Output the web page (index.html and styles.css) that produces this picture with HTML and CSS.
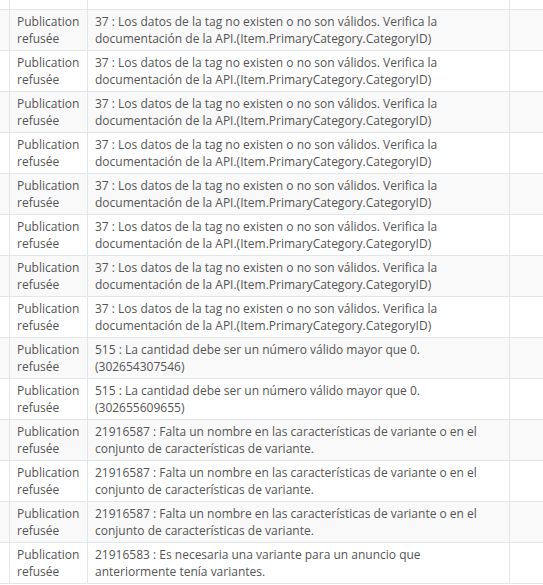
FILE: index.html
```html
<!DOCTYPE html>
<html lang="fr">

<head>
    <meta charset="UTF-8">
    <title>Journal des publications</title>
    <link rel="stylesheet" href="styles.css">
</head>

<body>
    <div class="log-wrap">
        <table class="log-table">
            <colgroup>
                <col class="col-edge">
                <col class="col-status">
                <col class="col-msg">
                <col class="col-extra">
            </colgroup>
            <tr class="spacer-row">
                <td></td>
                <td></td>
                <td></td>
                <td></td>
            </tr>
            <tr>
                <td></td>
                <td>Publication refusée</td>
                <td>37 : Los datos de la tag no existen o no son válidos. Verifica la documentación de la API.(Item.PrimaryCategory.CategoryID)</td>
                <td></td>
            </tr>
            <tr>
                <td></td>
                <td>Publication refusée</td>
                <td>37 : Los datos de la tag no existen o no son válidos. Verifica la documentación de la API.(Item.PrimaryCategory.CategoryID)</td>
                <td></td>
            </tr>
            <tr>
                <td></td>
                <td>Publication refusée</td>
                <td>37 : Los datos de la tag no existen o no son válidos. Verifica la documentación de la API.(Item.PrimaryCategory.CategoryID)</td>
                <td></td>
            </tr>
            <tr>
                <td></td>
                <td>Publication refusée</td>
                <td>37 : Los datos de la tag no existen o no son válidos. Verifica la documentación de la API.(Item.PrimaryCategory.CategoryID)</td>
                <td></td>
            </tr>
            <tr>
                <td></td>
                <td>Publication refusée</td>
                <td>37 : Los datos de la tag no existen o no son válidos. Verifica la documentación de la API.(Item.PrimaryCategory.CategoryID)</td>
                <td></td>
            </tr>
            <tr>
                <td></td>
                <td>Publication refusée</td>
                <td>37 : Los datos de la tag no existen o no son válidos. Verifica la documentación de la API.(Item.PrimaryCategory.CategoryID)</td>
                <td></td>
            </tr>
            <tr>
                <td></td>
                <td>Publication refusée</td>
                <td>37 : Los datos de la tag no existen o no son válidos. Verifica la documentación de la API.(Item.PrimaryCategory.CategoryID)</td>
                <td></td>
            </tr>
            <tr>
                <td></td>
                <td>Publication refusée</td>
                <td>37 : Los datos de la tag no existen o no son válidos. Verifica la documentación de la API.(Item.PrimaryCategory.CategoryID)</td>
                <td></td>
            </tr>
            <tr>
                <td></td>
                <td>Publication refusée</td>
                <td>515 : La cantidad debe ser un número válido mayor que 0.<br>(302654307546)</td>
                <td></td>
            </tr>
            <tr>
                <td></td>
                <td>Publication refusée</td>
                <td>515 : La cantidad debe ser un número válido mayor que 0.<br>(302655609655)</td>
                <td></td>
            </tr>
            <tr>
                <td></td>
                <td>Publication refusée</td>
                <td>21916587 : Falta un nombre en las características de variante o en el conjunto de características de variante.</td>
                <td></td>
            </tr>
            <tr>
                <td></td>
                <td>Publication refusée</td>
                <td>21916587 : Falta un nombre en las características de variante o en el conjunto de características de variante.</td>
                <td></td>
            </tr>
            <tr>
                <td></td>
                <td>Publication refusée</td>
                <td>21916587 : Falta un nombre en las características de variante o en el conjunto de características de variante.</td>
                <td></td>
            </tr>
            <tr>
                <td></td>
                <td>Publication refusée</td>
                <td>21916583 : Es necesaria una variante para un anuncio que anteriormente tenía variantes.</td>
                <td></td>
            </tr>
        </table>
    </div>
</body>

</html>
```

FILE: styles.css
```css
/* journal des erreurs de publication */
body {
    margin: 0;
    font-family: 'Open Sans', sans-serif;
    font-size: 12px;
    color: #555;
    background: #fff;
    overflow: hidden;
}

.log-wrap {
    width: 543px;
    height: 585px;
    overflow: hidden;
}

.log-table {
    border-collapse: separate;
    border-spacing: 0;
    table-layout: fixed;
    width: 610px;
}

.col-edge {
    width: 10px;
}

.col-status {
    width: 78px;
}

.col-msg {
    width: 422px;
}

.col-extra {
    width: 100px;
}

.log-table td {
    box-sizing: border-box;
    border-right: 1px solid #e4e7ea;
    border-bottom: 1px solid #e4e7ea;
    padding: 3px 7px;
    line-height: 17px;
    height: 41px;
    vertical-align: top;
}

.log-table tr:nth-child(even) td {
    background: #f9f9f9;
}

.spacer-row td {
    height: 10px;
    padding: 0;
}

.log-table td:first-child {
    padding: 0;
}
```
